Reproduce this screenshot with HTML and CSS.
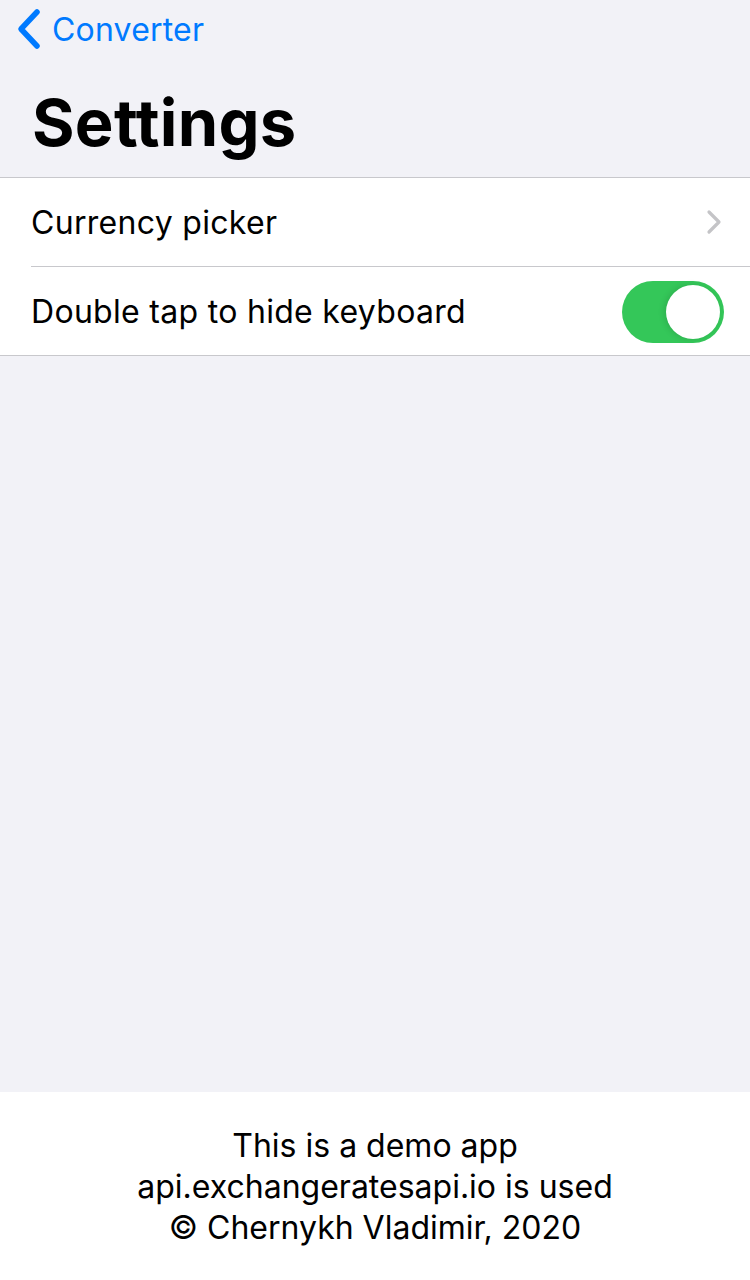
FILE: index.html
```html
<!DOCTYPE html>
<html>
<head>
<meta charset="utf-8">
<link rel="stylesheet" href="styles.css">
</head>
<body>
<div class="screen">
  <header class="nav">
    <div class="nav-bar">
      <a class="back">
        <svg class="back-chevron" width="26" height="42" viewBox="0 0 26 42"><path d="M21 4 L5 21 L21 38" fill="none" stroke="#007aff" stroke-width="5.5" stroke-linecap="round" stroke-linejoin="round"/></svg>
        <span class="back-label">Converter</span>
      </a>
    </div>
    <h1 class="title">Settings</h1>
  </header>
  <section class="list">
    <div class="row">
      <span class="row-label">Currency picker</span>
      <svg class="disclosure" width="16" height="26" viewBox="0 0 16 26"><path d="M3 3 L13 13 L3 23" fill="none" stroke="#c4c4c7" stroke-width="3.2" stroke-linecap="round" stroke-linejoin="round"/></svg>
    </div>
    <div class="row">
      <span class="row-label">Double tap to hide keyboard</span>
      <div class="switch"><div class="knob"></div></div>
    </div>
  </section>
  <div class="spacer"></div>
  <footer class="footer">
    <p>This is a demo app</p>
    <p>api.exchangeratesapi.io is used</p>
    <p>© Chernykh Vladimir, 2020</p>
  </footer>
</div>
</body>
</html>
```
FILE: styles.css
```css
html, body {
  margin: 0;
  padding: 0;
}
body {
  background: #f2f2f7;
  font-family: Inter, "Noto Sans", "Liberation Sans", sans-serif;
  color: #000;
}
.screen {
  width: 750px;
  height: 1280px;
  display: flex;
  flex-direction: column;
}
.nav {
  height: 178px;
  border-bottom: 1px solid #c8c8cc;
  box-sizing: border-box;
  display: flex;
  flex-direction: column;
}
.nav-bar {
  height: 62px;
  display: flex;
  align-items: center;
  padding-left: 16px;
}
.back {
  display: flex;
  align-items: center;
  gap: 10px;
  color: #007aff;
  margin-top: -4px;
}
.back-label {
  font-size: 32px;
  letter-spacing: 0.2px;
}
.title {
  margin: 0;
  padding-left: 32px;
  font-size: 65px;
  font-weight: 700;
  letter-spacing: 0.3px;
  line-height: 1;
  margin-top: 28px;
}
.list {
  background: #fff;
  border-bottom: 1px solid #c8c8cc;
}
.row {
  height: 88px;
  display: flex;
  align-items: center;
  justify-content: space-between;
  padding: 0 26px 0 31px;
}
.row + .row {
  border-top: 1px solid #c8c8cc;
  margin-left: 31px;
  padding-left: 0;
}
.row-label {
  font-size: 32px;
  letter-spacing: 0.3px;
}
.disclosure {
  margin-right: 2px;
}
.switch {
  width: 102px;
  height: 62px;
  border-radius: 31px;
  background: #34c759;
  display: flex;
  align-items: center;
  justify-content: flex-end;
  padding: 0 4px;
  box-sizing: border-box;
  margin-top: 2px;
}
.knob {
  width: 54px;
  height: 54px;
  border-radius: 50%;
  background: #fff;
  box-shadow: -2px 0 6px rgba(0,0,0,0.12);
}
.spacer {
  flex: 1;
}
.footer {
  height: 188px;
  background: #fff;
  display: flex;
  flex-direction: column;
  align-items: center;
  padding-top: 33px;
  box-sizing: border-box;
}
.footer p {
  margin: 0;
  font-size: 32px;
  line-height: 41px;
}
```
